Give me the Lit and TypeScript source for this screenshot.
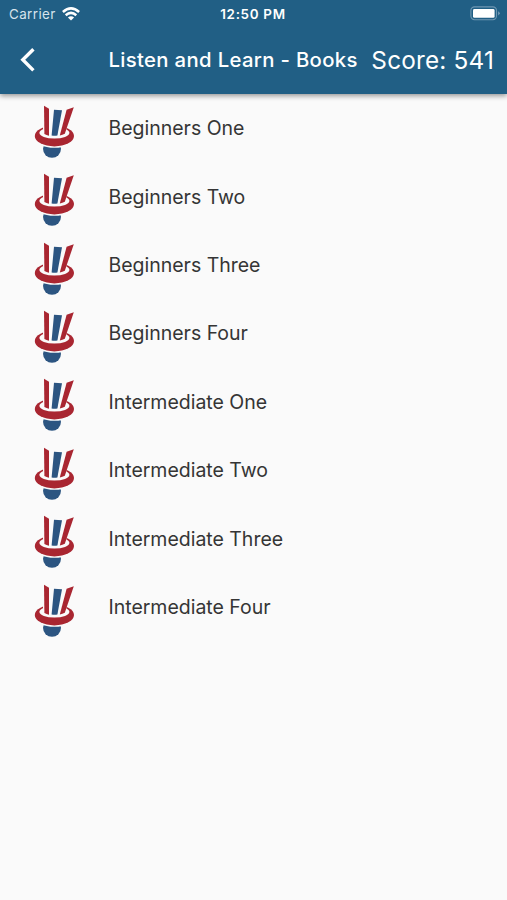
import { LitElement, html, css, svg } from "lit";
import { customElement, property } from "lit/decorators.js";

const BOOKS = [
  "Beginners One",
  "Beginners Two",
  "Beginners Three",
  "Beginners Four",
  "Intermediate One",
  "Intermediate Two",
  "Intermediate Three",
  "Intermediate Four",
];

const hat = svg`
  <circle cx="28" cy="50.8" r="9" fill="#2c5581" />
  <ellipse cx="30.5" cy="39" rx="20" ry="10.8" fill="#fafafa" />
  <ellipse cx="30.4" cy="38" rx="19.6" ry="10.4" fill="#a92631" />
  <ellipse cx="30.4" cy="34.8" rx="15" ry="5.8" fill="#fafafa" />
  <path d="M19 26 H42.4 V34 H19Z" fill="#fafafa" />
  <path d="M20 7.8 L25 10.8 L25 37.8 Q22.4 37.2 20.4 36Z" fill="#a92631" />
  <path d="M30 11.8 L38 12.3 L33.4 37.6 Q30.5 38 27.6 37.6Z" fill="#2c5581" />
  <path d="M42.6 11.8 L49.8 9.3 L40.8 35.8 Q38.5 37 35.8 37.5Z" fill="#a92631" />`;

@customElement("status-bar")
class StatusBar extends LitElement {
  static styles = css`
    :host { display: grid; grid-template-columns: 1fr auto 1fr; align-items: center; height: 27px; padding: 0 6px 0 9px; font-size: 13.4px; }
    .carrier { display: flex; align-items: center; gap: 6px; letter-spacing: 0.4px; color: #d6e3ec; }
    .time { font-weight: 600; letter-spacing: 0.7px; margin-right: 4px; }
    .battery { justify-self: end; display: block; }
    .wifi { display: block; }
  `;
  render() {
    return html`
      <div class="carrier"><span>Carrier</span>
        <svg class="wifi" width="18" height="14" viewBox="0 0 18 14" fill="none" stroke="#fff" stroke-width="2.5">
          <path d="M.9 5 Q9 -2.2 17.1 5" /><path d="M3.7 8.2 Q9 3.5 14.3 8.2" />
          <path d="M9 13.6 L5.9 10.6 Q9 7.8 12.1 10.6Z" fill="#fff" stroke="none" />
        </svg>
      </div>
      <div class="time">12:50 PM</div>
      <svg class="battery" width="31" height="15" viewBox="0 0 31 15">
        <rect x=".9" y=".9" width="25.6" height="12.8" rx="3.6" fill="none" stroke="#6f97b2" stroke-width="1.1" />
        <rect x="3" y="3" width="21.6" height="8.8" rx="1.4" fill="#fff" />
        <path d="M28.2 5.2 Q31.2 7.3 28.2 9.4Z" fill="#7da0ba" />
      </svg>`;
  }
}

@customElement("book-row")
class BookRow extends LitElement {
  @property() name = "";
  static styles = css`
    :host { display: flex; align-items: center; height: 68.4px; padding-left: 24px; color: #353535; font-size: 19.5px; }
    .icon { flex: none; width: 60px; height: 66px; margin: 1.2px 24.5px 0 0; }
    .label { letter-spacing: -0.02px; white-space: nowrap; line-height: 24px; margin-top: -4px; }
  `;
  render() {
    return html`<svg class="icon" viewBox="0 0 60 66">${hat}</svg><span class="label">${this.name}</span>`;
  }
}

@customElement("app-root")
class AppRoot extends LitElement {
  static styles = css`
    :host { display: block; height: 900px; overflow: hidden; background: #fafafa; font-family: Inter, "Liberation Sans", sans-serif; }
    .header { position: relative; height: 94px; color: #fff; background: #215f85; box-shadow: 0 2px 5px rgba(0, 0, 0, 0.4); }
    .bar { display: flex; align-items: center; height: 66px; padding: 0 13px 0 20px; }
    .back { flex: none; width: 16px; height: 26px; margin-right: 72.5px; }
    .title { flex: 1; margin-top: -2px; font-size: 20.3px; font-weight: 500; letter-spacing: 0.34px; white-space: nowrap; }
    .score { font-size: 24.3px; letter-spacing: 0.2px; white-space: nowrap; }
    .list { padding-top: 2px; }
  `;
  render() {
    return html`
      <header class="header">
        <status-bar></status-bar>
        <div class="bar">
          <svg class="back" viewBox="0 0 16 26" fill="none" stroke="#fff" stroke-width="3.4"><path d="M13.4 2.2 L2.8 12.8 L13.4 23.4" /></svg>
          <span class="title">Listen and Learn - Books</span>
          <span class="score">Score: 541</span>
        </div>
      </header>
      <main class="list">${BOOKS.map((b) => html`<book-row .name=${b}></book-row>`)}</main>`;
  }
}
